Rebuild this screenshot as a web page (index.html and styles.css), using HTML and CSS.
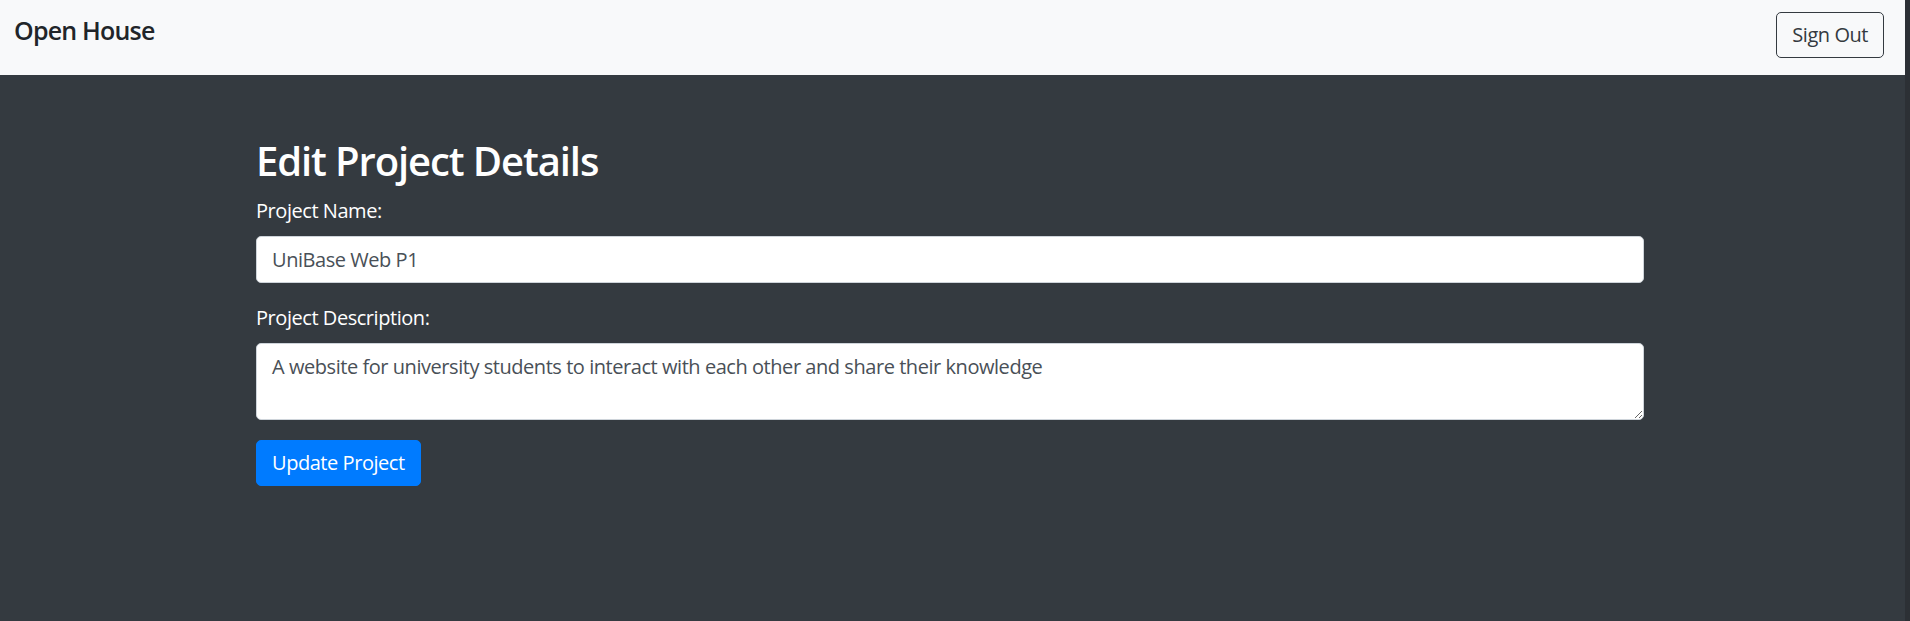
FILE: index.html
```html
<!DOCTYPE html>
<html lang="en">
<head>
<meta charset="utf-8">
<title>Open House - Edit Project</title>
<link rel="stylesheet" href="styles.css">
</head>
<body>
<div class="page">
  <nav class="navbar">
    <a class="brand" href="#">Open House</a>
    <button class="btn btn-outline" type="button">Sign Out</button>
  </nav>
  <main class="main">
    <div class="container">
      <h2 class="title">Edit Project Details</h2>
      <form class="form">
        <div class="form-group">
          <label class="label" for="pname">Project Name:</label>
          <input class="control" id="pname" type="text" value="UniBase Web P1">
        </div>
        <div class="form-group">
          <label class="label" for="pdesc">Project Description:</label>
          <textarea class="control textarea" id="pdesc" rows="2">A website for university students to interact with each other and share their knowledge</textarea>
        </div>
        <button class="btn btn-primary" type="submit">Update Project</button>
      </form>
    </div>
  </main>
</div>
<div class="scrollbar"></div>
</body>
</html>
```
FILE: styles.css
```css
* { box-sizing: border-box; }
html, body { height: 100%; }
body {
  margin: 0;
  display: flex;
  background: #343a40;
  font-family: "Open Sans", "Noto Sans", sans-serif;
  font-size: 20px;
  line-height: 30px;
  letter-spacing: -0.45px;
  color: #212529;
  overflow: hidden;
}
.page { flex: 1; min-width: 0; }
.scrollbar { width: 5px; background: #2c3035; }

.navbar {
  height: 75px;
  background: #f8f9fa;
  display: flex;
  justify-content: space-between;
  align-items: flex-start;
  padding: 12px 21px 0 14px;
}
.brand {
  font-size: 25px;
  line-height: 37.5px;
  font-weight: 600;
  letter-spacing: -0.8px;
  color: #212529;
  text-decoration: none;
}

.btn {
  font-family: inherit;
  font-size: 20px;
  line-height: 30px;
  letter-spacing: -0.45px;
  padding: 7px 15px;
  border-radius: 5px;
  border: 1px solid transparent;
  cursor: pointer;
}
.btn-outline {
  background: transparent;
  border-color: #343a40;
  color: #343a40;
}
.btn-primary {
  background: #007bff;
  border-color: #007bff;
  color: #fff;
}

.main { padding: 62px 0 0 256px; }
.container { width: 1388px; }
.title {
  margin: 0 0 11px;
  font-size: 40px;
  line-height: 48px;
  font-weight: 600;
  letter-spacing: -1.1px;
  color: #fff;
}
.form-group { margin-bottom: 20px; }
.label {
  display: block;
  margin-bottom: 10px;
  color: #fff;
}
.control {
  display: block;
  width: 100%;
  height: 47px;
  padding: 7.5px 15px;
  font-family: inherit;
  font-size: 20px;
  line-height: 30px;
  letter-spacing: -0.45px;
  color: #495057;
  background: #fff;
  border: 1px solid #ced4da;
  border-radius: 5px;
}
.textarea { height: 77px; resize: vertical; }
```
